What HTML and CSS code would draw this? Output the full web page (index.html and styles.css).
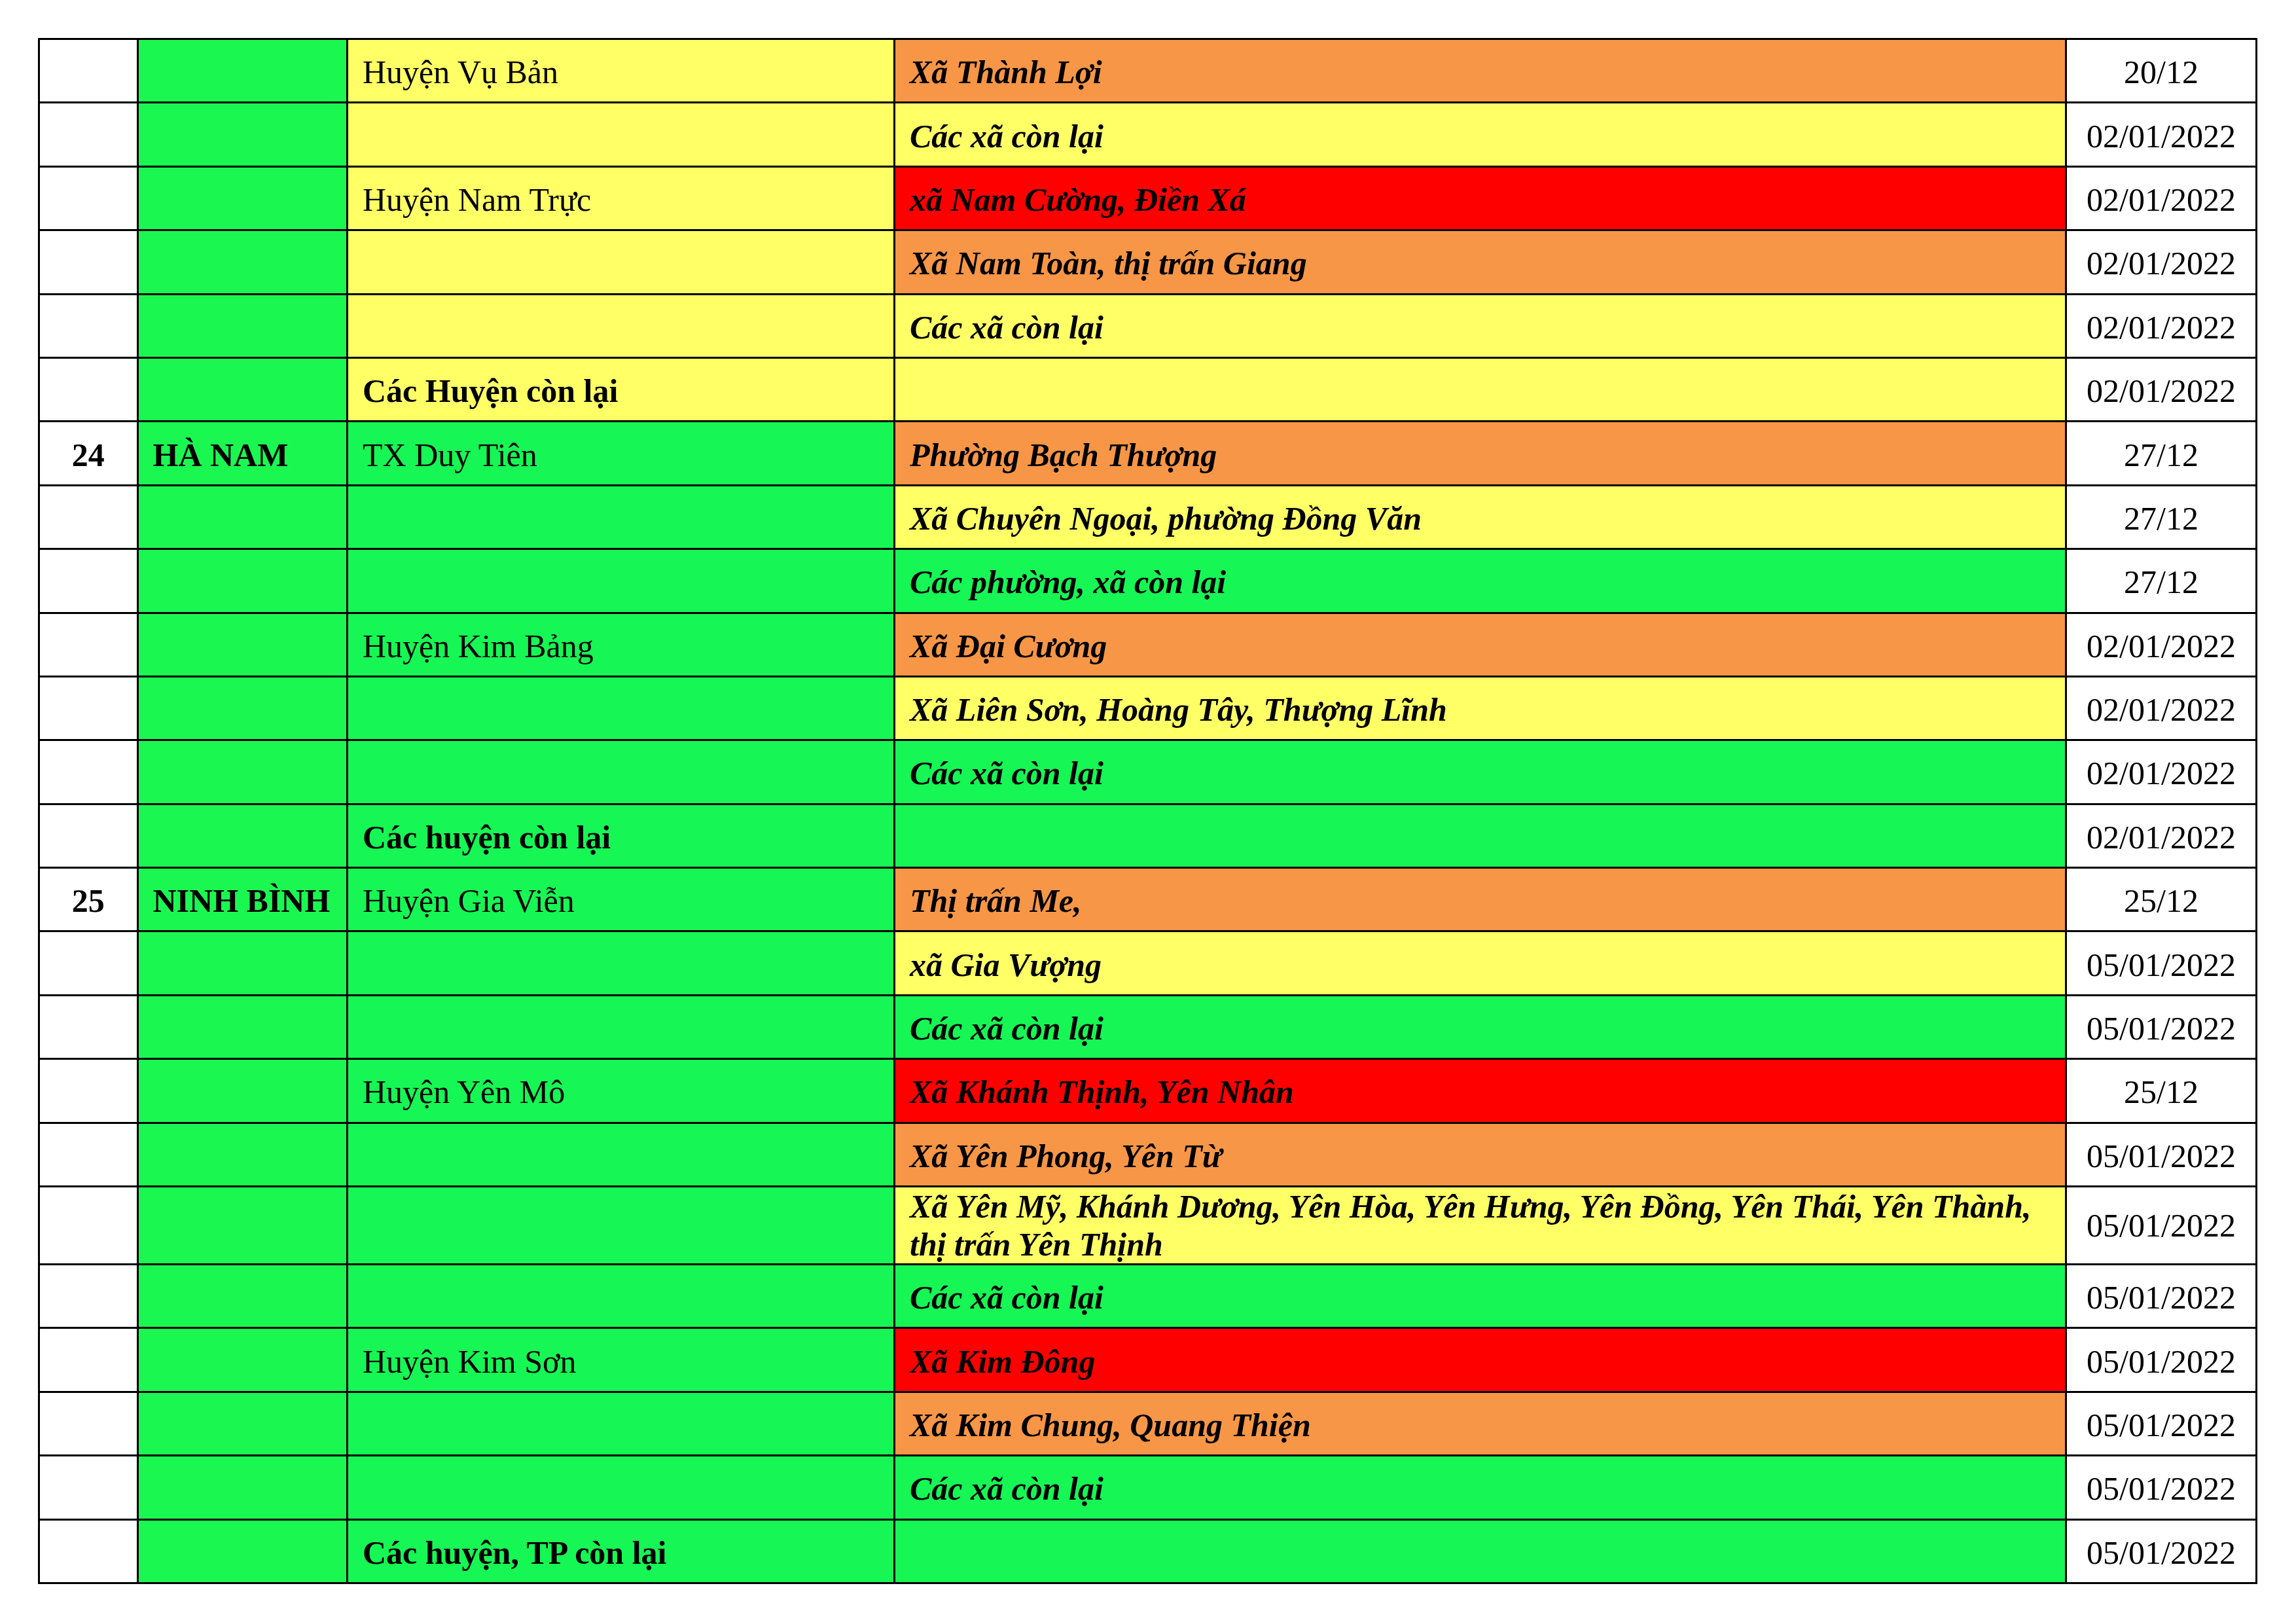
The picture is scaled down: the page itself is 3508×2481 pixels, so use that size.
FILE: index.html
```html
<!DOCTYPE html>
<html lang="vi">
<head>
<meta charset="utf-8">
<title>Bảng cấp độ dịch</title>
<link rel="stylesheet" href="styles.css">
</head>
<body>
<div class="page">
<table class="grid">
  <colgroup>
    <col class="c-no">
    <col class="c-prov">
    <col class="c-dist">
    <col class="c-ward">
    <col class="c-date">
  </colgroup>
  <tbody>
    <tr><td class="no"></td><td class="prov g1"></td><td class="dist y">Huyện Vụ Bản</td><td class="ward o">Xã Thành Lợi</td><td class="date">20/12</td></tr>
    <tr><td class="no"></td><td class="prov g1"></td><td class="dist y"></td><td class="ward y">Các xã còn lại</td><td class="date">02/01/2022</td></tr>
    <tr><td class="no"></td><td class="prov g1"></td><td class="dist y">Huyện Nam Trực</td><td class="ward r">xã Nam Cường, Điền Xá</td><td class="date">02/01/2022</td></tr>
    <tr><td class="no"></td><td class="prov g1"></td><td class="dist y"></td><td class="ward o">Xã Nam Toàn, thị trấn Giang</td><td class="date">02/01/2022</td></tr>
    <tr><td class="no"></td><td class="prov g1"></td><td class="dist y"></td><td class="ward y">Các xã còn lại</td><td class="date">02/01/2022</td></tr>
    <tr><td class="no"></td><td class="prov g1"></td><td class="dist y bold">Các Huyện còn lại</td><td class="ward y"></td><td class="date">02/01/2022</td></tr>
    <tr><td class="no">24</td><td class="prov g1">HÀ NAM</td><td class="dist g2">TX Duy Tiên</td><td class="ward o">Phường Bạch Thượng</td><td class="date">27/12</td></tr>
    <tr><td class="no"></td><td class="prov g1"></td><td class="dist g2"></td><td class="ward y">Xã Chuyên Ngoại, phường Đồng Văn</td><td class="date">27/12</td></tr>
    <tr><td class="no"></td><td class="prov g1"></td><td class="dist g2"></td><td class="ward g2">Các phường, xã còn lại</td><td class="date">27/12</td></tr>
    <tr><td class="no"></td><td class="prov g1"></td><td class="dist g2">Huyện Kim Bảng</td><td class="ward o">Xã Đại Cương</td><td class="date">02/01/2022</td></tr>
    <tr><td class="no"></td><td class="prov g1"></td><td class="dist g2"></td><td class="ward y">Xã Liên Sơn, Hoàng Tây, Thượng Lĩnh</td><td class="date">02/01/2022</td></tr>
    <tr><td class="no"></td><td class="prov g1"></td><td class="dist g2"></td><td class="ward g2">Các xã còn lại</td><td class="date">02/01/2022</td></tr>
    <tr><td class="no"></td><td class="prov g1"></td><td class="dist g2 bold">Các huyện còn lại</td><td class="ward g2"></td><td class="date">02/01/2022</td></tr>
    <tr><td class="no">25</td><td class="prov g1">NINH BÌNH</td><td class="dist g2">Huyện Gia Viễn</td><td class="ward o">Thị trấn Me,</td><td class="date">25/12</td></tr>
    <tr><td class="no"></td><td class="prov g1"></td><td class="dist g2"></td><td class="ward y">xã Gia Vượng</td><td class="date">05/01/2022</td></tr>
    <tr><td class="no"></td><td class="prov g1"></td><td class="dist g2"></td><td class="ward g2">Các xã còn lại</td><td class="date">05/01/2022</td></tr>
    <tr><td class="no"></td><td class="prov g1"></td><td class="dist g2">Huyện Yên Mô</td><td class="ward r">Xã Khánh Thịnh, Yên Nhân</td><td class="date">25/12</td></tr>
    <tr><td class="no"></td><td class="prov g1"></td><td class="dist g2"></td><td class="ward o">Xã Yên Phong, Yên Từ</td><td class="date">05/01/2022</td></tr>
    <tr class="tall"><td class="no"></td><td class="prov g1"></td><td class="dist g2"></td><td class="ward y">Xã Yên Mỹ, Khánh Dương, Yên Hòa, Yên Hưng, Yên Đồng, Yên Thái, Yên Thành,<br>thị trấn Yên Thịnh</td><td class="date">05/01/2022</td></tr>
    <tr><td class="no"></td><td class="prov g1"></td><td class="dist g2"></td><td class="ward g2">Các xã còn lại</td><td class="date">05/01/2022</td></tr>
    <tr><td class="no"></td><td class="prov g1"></td><td class="dist g2">Huyện Kim Sơn</td><td class="ward r">Xã Kim Đông</td><td class="date">05/01/2022</td></tr>
    <tr><td class="no"></td><td class="prov g1"></td><td class="dist g2"></td><td class="ward o">Xã Kim Chung, Quang Thiện</td><td class="date">05/01/2022</td></tr>
    <tr><td class="no"></td><td class="prov g1"></td><td class="dist g2"></td><td class="ward g2">Các xã còn lại</td><td class="date">05/01/2022</td></tr>
    <tr><td class="no"></td><td class="prov g1"></td><td class="dist g2 bold">Các huyện, TP còn lại</td><td class="ward g2"></td><td class="date">05/01/2022</td></tr>
  </tbody>
</table>
</div>
</body>
</html>
```

FILE: styles.css
```css
html, body {
  margin: 0;
  padding: 0;
  background: #ffffff;
}

.page {
  padding: 58px 0 0 58px;
}

.grid {
  border-collapse: collapse;
  table-layout: fixed;
  width: 3391px;
  font-family: "Liberation Serif", "Times New Roman", serif;
  font-size: 50px;
  color: #000000;
}

.c-no { width: 150.5px; }
.c-prov { width: 320.5px; }
.c-dist { width: 836px; }
.c-ward { width: 1790px; }
.c-date { width: 291px; }

.grid td {
  border: 3px solid #000000;
  height: 90.4px;
  padding: 4px 22px 0;
  vertical-align: middle;
  white-space: nowrap;
  line-height: normal;
}

.grid tr.tall td {
  height: auto;
  padding-top: 0;
}

.no {
  text-align: center;
  font-weight: bold;
}

.prov {
  font-weight: bold;
}

.ward {
  font-weight: bold;
  font-style: italic;
}

.date {
  text-align: center;
}

.bold {
  font-weight: bold;
}

.g1 { background: #1bf751; }
.g2 { background: #16f654; }
.y { background: #ffff66; }
.o { background: #f79646; }
.r { background: #ff0000; }
```
